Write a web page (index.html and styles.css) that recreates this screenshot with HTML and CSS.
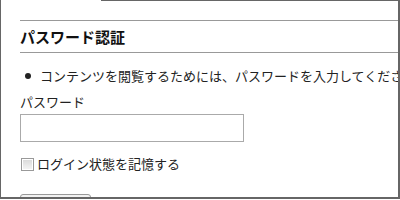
FILE: index.html
```html
<!DOCTYPE html>
<html lang="ja">
<head>
    <meta charset="utf-8">
    <title>パスワード認証</title>
    <link rel="stylesheet" href="styles.css">
</head>
<body>
    <div class="frame">
        <div class="top-edge"></div>
        <form class="auth">
            <h2 class="auth-title">パスワード認証</h2>
            <ul class="notes">
                <li>コンテンツを閲覧するためには、パスワードを入力してください。</li>
            </ul>
            <label class="field-label" for="pw">パスワード</label>
            <input class="field" type="password" id="pw">
            <label class="remember"><input type="checkbox"> ログイン状態を記憶する</label>
            <button type="button" class="submit">ログイン</button>
        </form>
    </div>
</body>
</html>
```

FILE: styles.css
```css
body {
    margin: 0;
    font-family: "Noto Sans CJK JP", "Noto Sans", sans-serif;
    color: #222;
    background: #fff;
}

.frame {
    position: relative;
    width: 397px;
    height: 197px;
    border-left: 1px solid #666;
    border-right: 2px solid #666;
    border-bottom: 2px solid #666;
    overflow: hidden;
}

.top-edge {
    position: absolute;
    top: 0;
    left: 100px;
    right: 0;
    height: 1px;
    background: #666;
}

.auth {
    padding: 20px 0 0 19px;
}

.auth-title {
    margin: 0;
    height: 31px;
    line-height: 31px;
    font-size: 15px;
    font-weight: bold;
    color: #111;
    border-top: 1px solid #999;
    border-bottom: 1px solid #999;
    white-space: nowrap;
}

.notes {
    margin: 14px 0 0;
    padding: 0;
    list-style: none;
    font-size: 13px;
    line-height: 18px;
    white-space: nowrap;
}

.notes li::before {
    content: "";
    display: inline-block;
    width: 6px;
    height: 6px;
    border-radius: 50%;
    background: #222;
    margin: 0 9px 2px 5px;
    vertical-align: middle;
}

.field-label {
    display: block;
    margin-top: 8px;
    font-size: 13px;
    line-height: 18px;
}

.field {
    display: block;
    box-sizing: border-box;
    width: 224px;
    height: 28px;
    margin-top: 3px;
    border: 1px solid #aaa;
    padding: 2px 4px;
}

.remember {
    display: flex;
    align-items: center;
    margin-top: 14px;
    font-size: 13px;
    line-height: 16px;
    white-space: nowrap;
}

.remember input {
    appearance: none;
    box-sizing: border-box;
    width: 13px;
    height: 13px;
    margin: 0 3px 0 1px;
    border: 1px solid #999;
    background: linear-gradient(#d8d8d8, #f6f6f6);
    box-shadow: inset 0 0 0 1px #fff;
}

.submit {
    margin-top: 22px;
    width: 71px;
    height: 26px;
    border: 1px solid #999;
    border-radius: 3px;
    background: #f2f2f2;
    font-family: inherit;
    font-size: 13px;
}
```
